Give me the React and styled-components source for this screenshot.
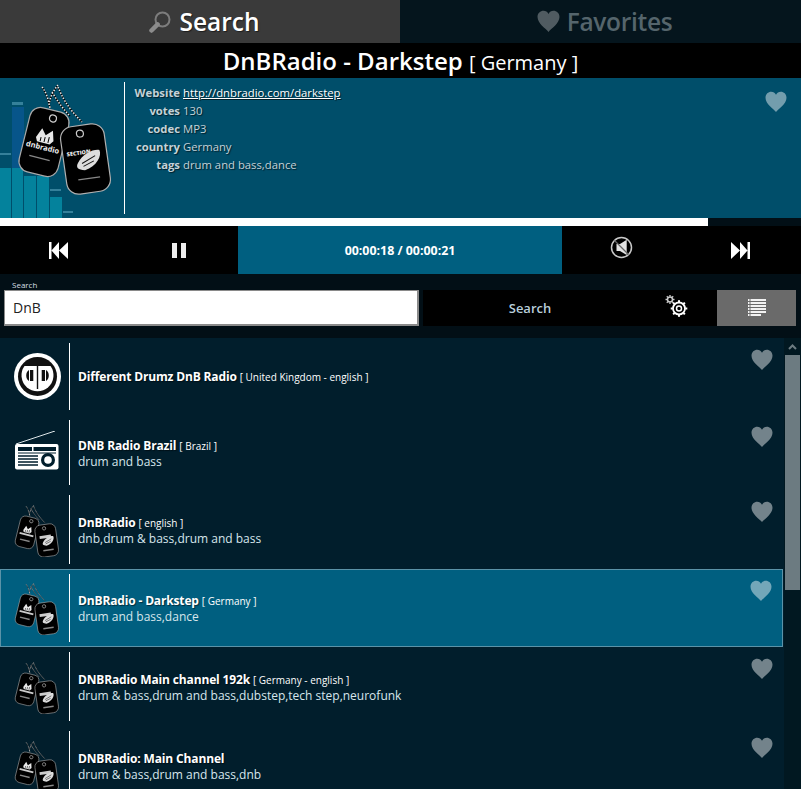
import React from 'react'
import styled, { createGlobalStyle } from 'styled-components'

const Global = createGlobalStyle`
  html, body { margin: 0; padding: 0; background: #011e2c; }
  body { font-family: "Open Sans", "Noto Sans", sans-serif; overflow: hidden; }
  * { box-sizing: border-box; }
`

const Page = styled.div`
  width: 801px;
  height: 789px;
  display: flex;
  flex-direction: column;
  overflow: hidden;
`

const Tabs = styled.div`
  display: grid;
  grid-template-columns: 400px 401px;
  height: 43px;
`

const Tab = styled.div`
  display: flex;
  align-items: center;
  justify-content: center;
  gap: ${p => (p.$active ? '8px' : '7px')};
  padding-left: ${p => (p.$active ? '9px' : '8px')};
  font-size: 24.5px;
  font-weight: 600;
  letter-spacing: ${p => (p.$active ? '0' : '-.3px')};
  background: ${p => (p.$active ? '#3a3a3a' : '#05151d')};
  color: ${p => (p.$active ? '#fff' : '#55656c')};
  text-shadow: ${p => (p.$active ? '1px 1px 1px rgba(0,0,0,.5)' : 'none')};
`

const TitleBar = styled.div`
  height: 35px;
  background: #000;
  color: #fff;
  text-align: center;
  font-size: 24px;
  font-weight: 600;
  line-height: 35px;
  white-space: nowrap;
  small { font-size: 20px; font-weight: 400; }
`

const Info = styled.div`
  height: 140px;
  background: #004e6a;
  display: flex;
  position: relative;
`

const Cover = styled.svg`
  width: 124px;
  height: 140px;
  flex: none;
  display: block;
`

const Divider = styled.div`
  width: 1px;
  flex: none;
  background: #fff;
  margin: 4px 0;
`

const Details = styled.div`
  display: grid;
  grid-template-columns: 55px auto;
  grid-auto-rows: 18px;
  column-gap: 3px;
  justify-content: start;
  padding-top: 6px;
  font-size: 11.3px;
  line-height: 18px;
  color: #c3d2d8;
  text-shadow: 1px 1px 1px rgba(0,0,0,.6);
  a { color: #fff; text-decoration: underline; }
`

const Key = styled.span`
  font-weight: 700;
  text-align: right;
`

const CornerHeart = styled.div`
  position: absolute;
  top: 13px;
  right: 14px;
  display: flex;
`

const Progress = styled.div`
  height: 8px;
  background: #020f16;
`

const ProgressFill = styled.div`
  height: 100%;
  background: #fff;
`

const Controls = styled.div`
  height: 48px;
  background: #000;
  display: grid;
  grid-template-columns: 119px 119px 324px 119px 120px;
`

const Control = styled.div`
  display: flex;
  align-items: center;
  justify-content: center;
`

const SkipControl = styled(Control)`
  padding-right: 2px;
`

const MuteControl = styled(Control)`
  padding-bottom: 5px;
`

const Time = styled(Control)`
  background: #005f80;
  color: #fff;
  font-size: 12.4px;
  font-weight: 700;
`

const SearchArea = styled.div`
  height: 64px;
  background: #020f16;
  padding: 6px 5px 0 4px;
`

const SearchLabel = styled.div`
  font-size: 8px;
  line-height: 10px;
  color: #d5dfe3;
  padding-left: 8px;
`

const SearchRow = styled.div`
  display: flex;
  height: 36px;
`

const SearchInput = styled.input`
  width: 415px;
  height: 36px;
  border: 1px solid #8a8a8a;
  border-width: 1px 2px 2px 1px;
  background: #fff;
  color: #222;
  font: 400 14px "Open Sans", sans-serif;
  padding: 0 8px;
  margin-right: 4px;
  outline: none;
`

const SearchButton = styled.div`
  width: 294px;
  background: #000;
  display: grid;
  grid-template-columns: 214px 80px;
  align-items: center;
  justify-items: center;
  color: #b9cfdb;
  font-size: 13px;
  font-weight: 600;
`

const ListToggle = styled(Control)`
  width: 79px;
  background: #6a6a6a;
`

const ListArea = styled.div`
  flex: 1;
  min-height: 0;
  display: grid;
  grid-template-columns: 784px 17px;
  background: #011e2c;
  overflow: hidden;
`

const Rows = styled.div`
  display: flex;
  flex-direction: column;
`

const Row = styled.div`
  flex: none;
  height: ${p => p.$height}px;
  display: flex;
  position: relative;
  background: ${p => (p.$selected ? '#005f80' : 'transparent')};
  border: 1px solid ${p => (p.$selected ? '#5b93a8' : 'transparent')};
  border-right-width: ${p => (p.$selected ? '1px' : '0')};
  width: 783px;
`

const Thumb = styled.div`
  width: 68px;
  flex: none;
  display: flex;
  align-items: center;
  justify-content: center;
  padding-left: 4px;
`

const RowText = styled.div`
  display: flex;
  flex-direction: column;
  justify-content: center;
  padding: ${p => (p.$single ? '0' : '1px')} 0 0 8px;
  color: #d7e6ec;
  font-size: 12px;
  line-height: 15px;
`

const RowTitle = styled.div`
  color: #fff;
  font-size: 12px;
  line-height: 16px;
  font-weight: 700;
  letter-spacing: -.15px;
  text-shadow: 1px 1px 1px rgba(0,0,0,.5);
  white-space: nowrap;
  small { font-size: 10px; line-height: 1; font-weight: 400; letter-spacing: 0; text-shadow: none; }
`

const RowHeart = styled.div`
  position: absolute;
  top: 10px;
  right: 10px;
  display: flex;
`

const ScrollTrack = styled.div`
  background: #011821;
  display: flex;
  flex-direction: column;
`

const ScrollArrow = styled.div`
  height: 17px;
  display: flex;
  align-items: center;
  justify-content: center;
`

const ScrollThumb = styled.div`
  height: 235px;
  width: 15px;
  margin-left: 1px;
  background: #6c7b81;
`

const RadioSvg = styled.svg`
  margin-bottom: 4px;
`

const Heart = ({ size = 22, opacity = 0.45 }) => (
  <svg width={size} height={size} viewBox="0 0 22 22">
    <path
      d="M11 21C8.500 18 .5 13 .5 6.800 .5 3 3.300 .8 6.200 .8 8.300 .8 10 2 11 3.800 12 2 13.700 .8 15.800 .8 18.700 .8 21.500 3 21.500 6.800 21.500 13 13.500 18 11 21Z"
      fill={`rgba(255,255,255,${opacity})`}
    />
  </svg>
)

const SearchIcon = () => (
  <svg width="22" height="22" viewBox="0 0 22 22">
    <circle cx="13.500" cy="8.500" r="7" fill="none" stroke="#7d7d7d" strokeWidth="2" />
    <path d="M8.600 13.400 2.500 19.500" stroke="#8c8c8c" strokeWidth="4.500" strokeLinecap="round" />
  </svg>
)

const SkipIcon = ({ flip }) => (
  <svg width="19" height="17" viewBox="0 0 19 17" style={flip ? { transform: 'scaleX(-1)' } : undefined}>
    <path d="M0 0H2.500V17H0ZM10 0V17L2.500 8.500ZM19 0V17L10 8.500Z" fill="#fff" />
  </svg>
)

const PauseIcon = () => (
  <svg width="14" height="15" viewBox="0 0 14 15">
    <path d="M0 0H5V15H0ZM9 0H14V15H9Z" fill="#eee" />
  </svg>
)

const MuteIcon = () => (
  <svg width="23" height="23" viewBox="0 0 23 23">
    <circle cx="11.500" cy="11.500" r="10" fill="none" stroke="#c8c8c8" strokeWidth="1.500" />
    <path d="M6.500 8H10L16.700 3.800V19L10 15H6.500Z" fill="#e4e4e4" />
    <path d="M4.500 4.500 18.500 18.500" stroke="#666" strokeWidth="1.300" />
  </svg>
)

const gearTeeth = [0, 45, 90, 135, 180, 225, 270, 315]

const GearIcon = () => (
  <svg width="21" height="21" viewBox="0 0 21 21" overflow="visible">
    <g transform="translate(3 1.500)">
      <circle r="2.500" fill="none" stroke="#ccc" strokeWidth="1.500" />
      {gearTeeth.map(a => (
        <rect key={a} x="-.7" y="-4.500" width="1.400" height="1.500" fill="#ccc" transform={`rotate(${a})`} />
      ))}
    </g>
    <g transform="translate(12 10.500)">
      <circle r="6" fill="none" stroke="#fff" strokeWidth="1.800" />
      <circle r="2.500" fill="none" stroke="#fff" strokeWidth="1.500" />
      {gearTeeth.map(a => (
        <rect key={a} x="-1" y="-8.300" width="2" height="2" fill="#fff" transform={`rotate(${a})`} />
      ))}
    </g>
  </svg>
)

const lineWidths = [18, 18, 18, 18, 18, 13]

const ListIcon = () => (
  <svg width="18" height="18" viewBox="0 0 18 18">
    {lineWidths.map((w, i) => (
      <g key={i} fill="#f2f2f2">
        <rect x="0" y={i * 3} width="1.500" height="2" />
        <rect x="2.500" y={i * 3} width={w - 2.500} height="2" />
      </g>
    ))}
  </svg>
)

const DrumzLogo = () => (
  <svg width="47" height="47" viewBox="0 0 47 47">
    <circle cx="23.500" cy="23.500" r="23.500" fill="#fff" />
    <circle cx="23.500" cy="23.500" r="19.500" fill="#111" />
    <path d="M10.500 13H36.500A16 16 0 1 1 10.500 13Z" fill="#fff" />
    <path d="M15 17C11.300 19 11.300 26 15 28Z" fill="#111" />
    <path d="M16 17H19.300V28H16Z" fill="#111" />
    <path d="M32 17C35.700 19 35.700 26 32 28Z" fill="#111" />
    <path d="M27.700 17H31V28H27.700Z" fill="#111" />
    <path d="M22.800 13H24.200V36H22.800Z" fill="#111" />
  </svg>
)

const RadioIcon = () => (
  <RadioSvg width="44" height="39" viewBox="0 0 44 39">
    <path d="M1 13 40 0" stroke="#dfe6e9" strokeWidth="1" />
    <rect x="0" y="13" width="43.500" height="25.500" rx="2" fill="#fff" />
    <path d="M3 16H17V20H3ZM18.500 16H41V20H18.500Z" fill="#011e2c" />
    <path d="M3 22H41" stroke="#011e2c" strokeWidth="1" />
    <path d="M3 25H23M3 28H23M3 31H23M3 34H23" stroke="#011e2c" strokeWidth="1.300" />
    <circle cx="33" cy="29" r="7" fill="#011e2c" />
    <circle cx="33" cy="29" r="3.800" fill="#fff" />
  </RadioSvg>
)

// dog tags from the station logo, coordinates are those of the cover
const chainPath = 'M42 9C46 14 48 20 50 30M58 7C54 12 50 18 49 27M58 9C62 18 66 28 82 44M52 14C58 24 64 32 70 38'

const Tags = ({ detail }) => (
  <g>
    <g fill="none" strokeWidth="1.500">
      <path d={chainPath} stroke="#000" />
      <path d={chainPath} stroke="#e8e8e8" strokeDasharray="1.500 1.500" />
    </g>
    <g transform="translate(44 64) rotate(14)">
      <rect x="-20" y="-33" width="40" height="66" rx="11" fill="#000" stroke="#a8a8a8" strokeWidth="1.200" />
      <circle cx="3" cy="-25" r="3.500" fill="none" stroke="#ccc" strokeWidth="1.200" />
      <path d="M-9 -3-5-13 0-7 6-13 9-3 6 1H-7Z" fill="#e8e8e8" />
      <path d="M-4-4V0M0-5V0M4-6V0" stroke="#000" strokeWidth="1" />
      {detail ? (
        <text x="0" y="8" textAnchor="middle" fontSize="7.500" fontWeight="700" fill="#eee" fontFamily="Open Sans, sans-serif">dnbradio</text>
      ) : (
        <rect x="-15" y="3" width="30" height="4" fill="#ccc" />
      )}
      <rect x="-11" y="16" width="21" height={detail ? 1.300 : 3} fill="#888" />
    </g>
    <g transform="translate(85.500 81) rotate(-8)">
      <rect x="-22" y="-34" width="44" height="68" rx="12" fill="#000" stroke="#b0b0b0" strokeWidth="1.200" />
      <circle cx="-2" cy="-26" r="3.500" fill="none" stroke="#ccc" strokeWidth="1.200" />
      {detail ? (
        <text x="-6" y="-5" textAnchor="middle" fontSize="5.500" fontWeight="800" fill="#eee" fontFamily="Open Sans, sans-serif">SECTION</text>
      ) : (
        <rect x="-14" y="-11" width="24" height="6" fill="#ccc" />
      )}
      <path d="M-8 3C-2-6 10-9 15-7 17-1 10 9-2 11-9 10-11 7-8 3Z" fill="#ddd" />
      <path d="M-4 4 10-2M-3 7 8 3" stroke="#111" strokeWidth="1" />
      <rect x="-10" y="19" width="22" height={detail ? 1.300 : 3} fill="#888" />
    </g>
  </g>
)

const DogTagsThumb = () => (
  <svg width="54" height="54" viewBox="8 2 114 114">
    <Tags />
  </svg>
)

const CoverArt = () => (
  <Cover viewBox="0 0 124 140">
    <path d="M12 29H24V90H12Z" fill="#07558a" />
    <path d="M0 90H11V140H0ZM12 90H23V140H12ZM24 98H36V140H24ZM37 98H49V140H37ZM50 119H62V140H50Z" fill="#04829c" />
    <path d="M12 24H23V27H12ZM0 75H11V77H0ZM50 111H61V113H50ZM63 133H73V135H63Z" fill="#35809a" />
    <Tags detail />
  </Cover>
)

const rows = [
  { icon: <DrumzLogo />, title: 'Different Drumz DnB Radio', tag: 'United Kingdom - english', height: 77 },
  { icon: <RadioIcon />, title: 'DNB Radio Brazil', tag: 'Brazil', text: 'drum and bass', height: 75 },
  { icon: <DogTagsThumb />, title: 'DnBRadio', tag: 'english', text: 'dnb,drum & bass,drum and bass', height: 79 },
  { icon: <DogTagsThumb />, title: 'DnBRadio - Darkstep', tag: 'Germany', text: 'drum and bass,dance', height: 78, selected: true },
  { icon: <DogTagsThumb />, title: 'DNBRadio Main channel 192k', tag: 'Germany - english', text: 'drum & bass,drum and bass,dubstep,tech step,neurofunk', height: 79 },
  { icon: <DogTagsThumb />, title: 'DNBRadio: Main Channel', text: 'drum & bass,drum and bass,dnb', height: 79 },
]

const details = [
  ['votes', '130'],
  ['codec', 'MP3'],
  ['country', 'Germany'],
  ['tags', 'drum and bass,dance'],
]

export default function App() {
  return (
    <Page>
      <Global />
      <Tabs>
        <Tab $active><SearchIcon />Search</Tab>
        <Tab><Heart size={23} opacity={0.3} />Favorites</Tab>
      </Tabs>
      <TitleBar>DnBRadio - Darkstep <small>[ Germany ]</small></TitleBar>
      <Info>
        <CoverArt />
        <Divider />
        <Details>
          <Key>Website</Key>
          <a href="#station">http://dnbradio.com/darkstep</a>
          {details.map(([k, v]) => (
            <React.Fragment key={k}>
              <Key>{k}</Key>
              <span>{v}</span>
            </React.Fragment>
          ))}
        </Details>
        <CornerHeart><Heart /></CornerHeart>
      </Info>
      <Progress><ProgressFill style={{ width: `${(708 / 801) * 100}%` }} /></Progress>
      <Controls>
        <SkipControl><SkipIcon /></SkipControl>
        <Control><PauseIcon /></Control>
        <Time>00:00:18 / 00:00:21</Time>
        <MuteControl><MuteIcon /></MuteControl>
        <SkipControl><SkipIcon flip /></SkipControl>
      </Controls>
      <SearchArea>
        <SearchLabel>Search</SearchLabel>
        <SearchRow>
          <SearchInput defaultValue="DnB" />
          <SearchButton>
            <span>Search</span>
            <GearIcon />
          </SearchButton>
          <ListToggle><ListIcon /></ListToggle>
        </SearchRow>
      </SearchArea>
      <ListArea>
        <Rows>
          {rows.map(r => (
            <Row key={r.title} $height={r.height} $selected={r.selected}>
              <Thumb>{r.icon}</Thumb>
              <Divider />
              <RowText $single={!r.text}>
                <RowTitle>{r.title} {r.tag && <small>[ {r.tag} ]</small>}</RowTitle>
                {r.text && <div>{r.text}</div>}
              </RowText>
              <RowHeart><Heart /></RowHeart>
            </Row>
          ))}
        </Rows>
        <ScrollTrack>
          <ScrollArrow>
            <svg width="9" height="6" viewBox="0 0 9 6">
              <path d="M1 5 4.500 1.500 8 5" fill="none" stroke="#6c7b81" strokeWidth="2" />
            </svg>
          </ScrollArrow>
          <ScrollThumb />
        </ScrollTrack>
      </ListArea>
    </Page>
  )
}
